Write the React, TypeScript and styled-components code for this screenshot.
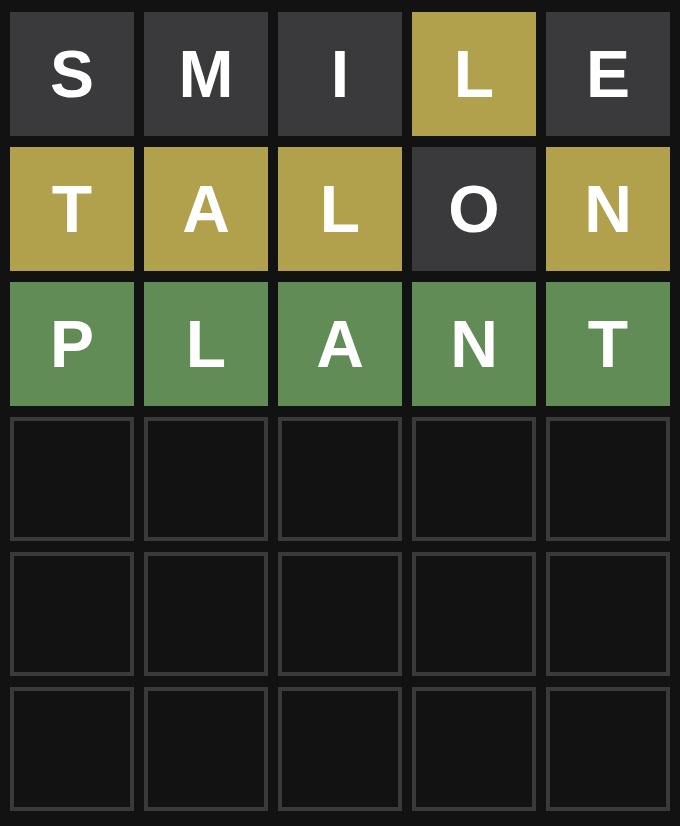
import React from "react";
import styled, { createGlobalStyle } from "styled-components";

const Global = createGlobalStyle`
  html, body { margin: 0; padding: 0; background: #121213; }
  body { font-family: "Liberation Sans", Arial, sans-serif; }
`;

type State = "absent" | "present" | "correct" | "empty";

const colors: Record<State, string> = {
  absent: "#3a3a3c",
  present: "#b1a04c",
  correct: "#618c55",
  empty: "#121213",
};

const Board = styled.div`
  width: 680px;
  height: 826px;
  box-sizing: border-box;
  padding: 12px 10px 15px;
  display: grid;
  grid-template-rows: repeat(6, 124px);
  row-gap: 11px;
  background: #121213;
`;

const Row = styled.div`
  display: grid;
  grid-template-columns: repeat(5, 124px);
  column-gap: 10px;
`;

const Tile = styled.div<{ $state: State }>`
  box-sizing: border-box;
  width: 124px;
  height: 124px;
  display: flex;
  align-items: center;
  justify-content: center;
  background: ${(p) => colors[p.$state]};
  border: ${(p) => (p.$state === "empty" ? "4px solid #3a3a3c" : "none")};
  color: #ffffff;
  font-family: "Liberation Sans", Arial, sans-serif;
  font-weight: 700;
  font-size: 66px;
  line-height: 1;
  text-transform: uppercase;
`;

const rows: { letter: string; state: State }[][] = [
  [
    { letter: "S", state: "absent" },
    { letter: "M", state: "absent" },
    { letter: "I", state: "absent" },
    { letter: "L", state: "present" },
    { letter: "E", state: "absent" },
  ],
  [
    { letter: "T", state: "present" },
    { letter: "A", state: "present" },
    { letter: "L", state: "present" },
    { letter: "O", state: "absent" },
    { letter: "N", state: "present" },
  ],
  [
    { letter: "P", state: "correct" },
    { letter: "L", state: "correct" },
    { letter: "A", state: "correct" },
    { letter: "N", state: "correct" },
    { letter: "T", state: "correct" },
  ],
  ...Array.from({ length: 3 }, () =>
    Array.from({ length: 5 }, () => ({ letter: "", state: "empty" as State }))
  ),
];

export default function App() {
  return (
    <>
      <Global />
      <Board>
        {rows.map((r, i) => (
          <Row key={i}>
            {r.map((t, j) => (
              <Tile key={j} $state={t.state}>
                {t.letter}
              </Tile>
            ))}
          </Row>
        ))}
      </Board>
    </>
  );
}
